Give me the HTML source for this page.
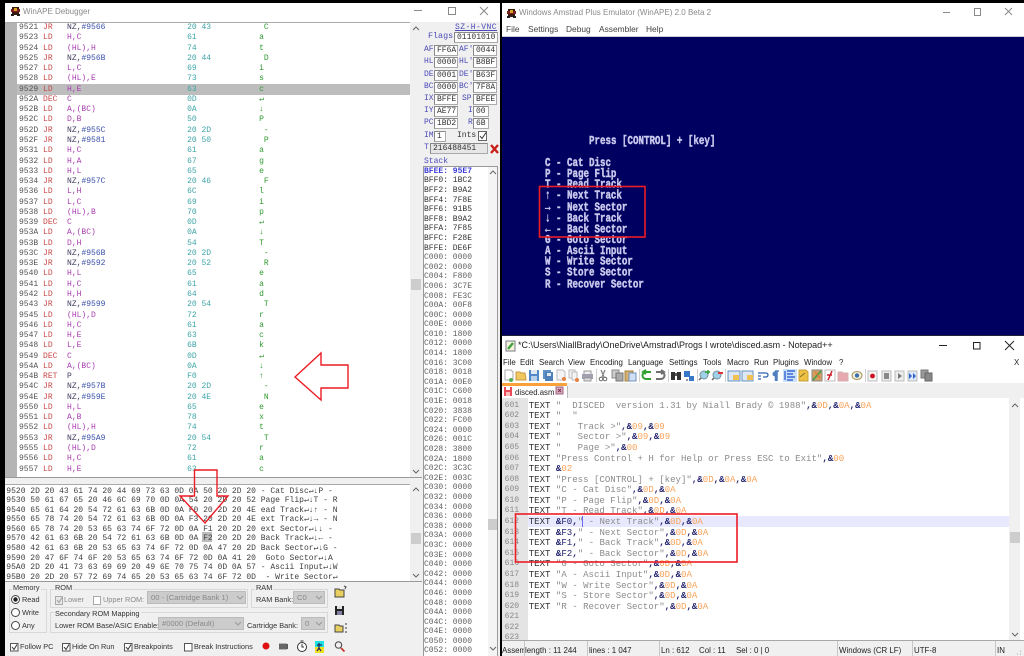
<!DOCTYPE html>
<html><head><meta charset="utf-8"><title>WinAPE</title>
<style>
html,body{margin:0;padding:0;background:#000;width:1024px;height:656px;overflow:hidden}
#r{position:absolute;left:0;top:0;width:1024px;height:656px;overflow:hidden;filter:blur(.38px);background:#000}
.a{position:absolute}
.t{position:absolute;font:7.9px/11px "Liberation Sans",sans-serif;color:#222;white-space:pre}
.c{font-size:7.35px;color:#333}
.g{color:#8a8a8a}
.m,pre{position:absolute;margin:0;font:8px "Liberation Mono",monospace;white-space:pre;color:#555}
pre b{font-weight:normal;color:#c84848}
pre i{font-style:normal;color:#a83cb0}
pre u{text-decoration:none;color:#3a50a8}
pre em{font-style:normal;color:#3fa5a8}
pre tt{font:inherit;color:#2f9a2f}
pre s{text-decoration:none;color:#3f3f5f}
.w{display:inline-block;width:4.8px;text-align:center;overflow:visible}
.lab{position:absolute;font:8px/10px "Liberation Mono",monospace;color:#4a4ab8}
.box{position:absolute;height:9px;background:#fff;border:1px solid #aaa;border-left-color:#888;border-top-color:#888;font:8px/9px "Liberation Mono",monospace;color:#333;padding-left:2px;white-space:pre}
.cmb{position:absolute;background:#ccc;border:1px solid #bbb;font:7.6px/12px "Liberation Sans",sans-serif;color:#888;padding-left:3px;box-sizing:border-box;white-space:pre}
.grp{position:absolute;border:1px solid #d8d8d8;box-sizing:border-box}
#ed{position:absolute;left:528.7px;top:400.700px;margin:0;font:9.07px/10.58px "Liberation Mono",monospace;color:#333;white-space:pre}
#ed q{quotes:none;color:#8c8c8c}
#ed s{text-decoration:none;color:#22226e;font-weight:bold}
#ed u{text-decoration:none;color:#f9a35a}
#nums{position:absolute;left:504.6px;top:400.700px;margin:0;font:8.1px/10.58px "Liberation Mono",monospace;color:#8a8a8a;white-space:pre}
.scr{position:absolute;margin:0;font:bold 9.17px "Liberation Mono",monospace;color:#c9c9ee;white-space:pre;transform-origin:0 0;transform:scaleY(1.35);-webkit-text-stroke:.35px #c9c9ee}
</style></head><body><div id="r">

<!-- DEBUGGER -->
<div class="a" style="left:5px;top:3px;width:495px;height:653px;background:#f0f0f0"></div>
<div class="a" style="left:5px;top:3px;width:495px;height:19px;background:#fff"></div>
<div class="t g" style="left:23px;top:6px;font-size:8px">WinAPE Debugger</div>
<div class="a" style="left:5px;top:22px;width:405px;height:455px;background:#fff;border-top:1px solid #aaa"></div>
<div class="a" style="left:5px;top:23px;width:12px;height:454px;background:#b4b4b4"></div>
<div class="a" style="left:17px;top:84px;width:393px;height:10.5px;background:#bdbdbd"></div>
<div class="a" style="left:410px;top:23px;width:12px;height:454px;background:#f0f0f0"></div>
<div class="a" style="left:411px;top:279px;width:10px;height:11px;background:#cdcdcd"></div>
<div class="a" style="left:5px;top:477px;width:417px;height:1px;background:#999"></div>
<pre style="left:19px;top:23.1px;line-height:10.27px">9521 <b>JR</b>   <s>NZ,</s><u>#9566</u>                 <em>20 43</em>          <tt> C</tt>
9523 <b>LD</b>   <i>H,C</i>                      <em>61</em>             <tt>a</tt>
9524 <b>LD</b>   <i>(HL),H</i>                   <em>74</em>             <tt>t</tt>
9525 <b>JR</b>   <s>NZ,</s><u>#956B</u>                 <em>20 44</em>          <tt> D</tt>
9527 <b>LD</b>   <i>L,C</i>                      <em>69</em>             <tt>i</tt>
9528 <b>LD</b>   <i>(HL),E</i>                   <em>73</em>             <tt>s</tt>
9529 <b>LD</b>   <i>H,E</i>                      <em>63</em>             <tt>c</tt>
952A <b>DEC</b>  <i>C</i>                        <em>0D</em>             <tt>↵</tt>
952B <b>LD</b>   <i>A,(BC)</i>                   <em>0A</em>             <tt>↓</tt>
952C <b>LD</b>   <i>D,B</i>                      <em>50</em>             <tt>P</tt>
952D <b>JR</b>   <s>NZ,</s><u>#955C</u>                 <em>20 2D</em>          <tt> -</tt>
952F <b>JR</b>   <s>NZ,</s><u>#9581</u>                 <em>20 50</em>          <tt> P</tt>
9531 <b>LD</b>   <i>H,C</i>                      <em>61</em>             <tt>a</tt>
9532 <b>LD</b>   <i>H,A</i>                      <em>67</em>             <tt>g</tt>
9533 <b>LD</b>   <i>H,L</i>                      <em>65</em>             <tt>e</tt>
9534 <b>JR</b>   <s>NZ,</s><u>#957C</u>                 <em>20 46</em>          <tt> F</tt>
9536 <b>LD</b>   <i>L,H</i>                      <em>6C</em>             <tt>l</tt>
9537 <b>LD</b>   <i>L,C</i>                      <em>69</em>             <tt>i</tt>
9538 <b>LD</b>   <i>(HL),B</i>                   <em>70</em>             <tt>p</tt>
9539 <b>DEC</b>  <i>C</i>                        <em>0D</em>             <tt>↵</tt>
953A <b>LD</b>   <i>A,(BC)</i>                   <em>0A</em>             <tt>↓</tt>
953B <b>LD</b>   <i>D,H</i>                      <em>54</em>             <tt>T</tt>
953C <b>JR</b>   <s>NZ,</s><u>#956B</u>                 <em>20 2D</em>          <tt> -</tt>
953E <b>JR</b>   <s>NZ,</s><u>#9592</u>                 <em>20 52</em>          <tt> R</tt>
9540 <b>LD</b>   <i>H,L</i>                      <em>65</em>             <tt>e</tt>
9541 <b>LD</b>   <i>H,C</i>                      <em>61</em>             <tt>a</tt>
9542 <b>LD</b>   <i>H,H</i>                      <em>64</em>             <tt>d</tt>
9543 <b>JR</b>   <s>NZ,</s><u>#9599</u>                 <em>20 54</em>          <tt> T</tt>
9545 <b>LD</b>   <i>(HL),D</i>                   <em>72</em>             <tt>r</tt>
9546 <b>LD</b>   <i>H,C</i>                      <em>61</em>             <tt>a</tt>
9547 <b>LD</b>   <i>H,E</i>                      <em>63</em>             <tt>c</tt>
9548 <b>LD</b>   <i>L,E</i>                      <em>6B</em>             <tt>k</tt>
9549 <b>DEC</b>  <i>C</i>                        <em>0D</em>             <tt>↵</tt>
954A <b>LD</b>   <i>A,(BC)</i>                   <em>0A</em>             <tt>↓</tt>
954B <b>RET</b>  <s>P</s>                        <em>F0</em>             <tt>↑</tt>
954C <b>JR</b>   <s>NZ,</s><u>#957B</u>                 <em>20 2D</em>          <tt> -</tt>
954E <b>JR</b>   <s>NZ,</s><u>#959E</u>                 <em>20 4E</em>          <tt> N</tt>
9550 <b>LD</b>   <i>H,L</i>                      <em>65</em>             <tt>e</tt>
9551 <b>LD</b>   <i>A,B</i>                      <em>78</em>             <tt>x</tt>
9552 <b>LD</b>   <i>(HL),H</i>                   <em>74</em>             <tt>t</tt>
9553 <b>JR</b>   <s>NZ,</s><u>#95A9</u>                 <em>20 54</em>          <tt> T</tt>
9555 <b>LD</b>   <i>(HL),D</i>                   <em>72</em>             <tt>r</tt>
9556 <b>LD</b>   <i>H,C</i>                      <em>61</em>             <tt>a</tt>
9557 <b>LD</b>   <i>H,E</i>                      <em>63</em>             <tt>c</tt></pre>

<!-- HEX -->
<div class="a" style="left:5px;top:484px;width:405px;height:97px;background:#fff;border-top:1px solid #aaa;box-sizing:border-box"></div>
<div class="a" style="left:410px;top:484px;width:12px;height:97px;background:#f0f0f0"></div>
<div class="a" style="left:411px;top:533px;width:10px;height:11px;background:#cdcdcd"></div>
<div class="a" style="left:202px;top:532px;width:9.5px;height:10px;background:#bdbdbd"></div>
<div class="a" style="left:5px;top:581px;width:417px;height:1px;background:#999"></div>
<pre style="left:6.3px;top:486.5px;line-height:9.6px;color:#3f3f3f">9520 2D 20 43 61 74 20 44 69 73 63 0D 0A 50 20 2D 20 - Cat Disc<span class="w">↵</span><span class="w">↓</span>P -
9530 50 61 67 65 20 46 6C 69 70 0D 0A 54 20 2D 20 52 Page Flip<span class="w">↵</span><span class="w">↓</span>T - R
9540 65 61 64 20 54 72 61 63 6B 0D 0A F0 20 2D 20 4E ead Track<span class="w">↵</span><span class="w">↓</span><span class="w">↑</span> - N
9550 65 78 74 20 54 72 61 63 6B 0D 0A F3 20 2D 20 4E ext Track<span class="w">↵</span><span class="w">↓</span><span class="w">→</span> - N
9560 65 78 74 20 53 65 63 74 6F 72 0D 0A F1 20 2D 20 ext Sector<span class="w">↵</span><span class="w">↓</span><span class="w">↓</span> -
9570 42 61 63 6B 20 54 72 61 63 6B 0D 0A F2 20 2D 20 Back Track<span class="w">↵</span><span class="w">↓</span><span class="w">←</span> -
9580 42 61 63 6B 20 53 65 63 74 6F 72 0D 0A 47 20 2D Back Sector<span class="w">↵</span><span class="w">↓</span>G -
9590 20 47 6F 74 6F 20 53 65 63 74 6F 72 0D 0A 41 20  Goto Sector<span class="w">↵</span><span class="w">↓</span>A
95A0 2D 20 41 73 63 69 69 20 49 6E 70 75 74 0D 0A 57 - Ascii Input<span class="w">↵</span><span class="w">↓</span>W
95B0 20 2D 20 57 72 69 74 65 20 53 65 63 74 6F 72 0D  - Write Sector<span class="w">↵</span></pre>

<!-- CONTROL PANEL -->
<div class="grp" style="left:9px;top:589px;width:38px;height:44px"></div>
<div class="grp" style="left:50px;top:589px;width:198px;height:19px"></div>
<div class="grp" style="left:251px;top:589px;width:77px;height:19px"></div>
<div class="grp" style="left:50px;top:612px;width:278px;height:21px"></div>
<div class="t c" style="left:12px;top:582px;background:#f0f0f0;padding:0 1px">Memory</div>
<div class="t c" style="left:54px;top:582px;background:#f0f0f0;padding:0 1px">ROM</div>
<div class="t c" style="left:255px;top:582px;background:#f0f0f0;padding:0 1px">RAM</div>
<div class="t c" style="left:54px;top:608px;background:#f0f0f0;padding:0 1px">Secondary ROM Mapping</div>
<div class="t c" style="left:22px;top:594px">Read</div>
<div class="t c" style="left:22px;top:607px">Write</div>
<div class="t c" style="left:22px;top:620px">Any</div>
<div class="t c g" style="left:64px;top:594px;color:#8a8a8a">Lower</div>
<div class="t c g" style="left:103px;top:594px;color:#8a8a8a">Upper ROM:</div>
<div class="cmb" style="left:147px;top:591px;width:99px;height:13px">00 - (Cartridge Bank 1)</div>
<div class="t c" style="left:256px;top:594px">RAM Bank:</div>
<div class="cmb" style="left:293px;top:591px;width:32px;height:13px">C0</div>
<div class="t c" style="left:55px;top:620px">Lower ROM Base/ASIC Enable:</div>
<div class="cmb" style="left:158px;top:617px;width:86px;height:13px">#0000 (Default)</div>
<div class="t c" style="left:247px;top:620px">Cartridge Bank:</div>
<div class="cmb" style="left:301px;top:617px;width:24px;height:13px">0</div>
<div class="t c" style="left:20px;top:641px">Follow PC</div>
<div class="t c" style="left:72px;top:641px">Hide On Run</div>
<div class="t c" style="left:134px;top:641px">Breakpoints</div>
<div class="t c" style="left:194px;top:641px">Break Instructions</div>

<!-- REGISTERS -->
<div class="lab" style="left:455px;top:23px;text-decoration:underline;letter-spacing:.45px">SZ-H-VNC</div>
<div class="lab" style="left:428px;top:31px;font-size:8.4px">Flags</div>
<div class="box" style="left:454px;top:32px;width:40px">01101010</div>
<div class="lab" style="left:424px;top:45px">AF</div><div class="box" style="left:434px;top:45px;width:20px">FF6A</div>
<div class="lab" style="left:459px;top:45px">AF'</div><div class="box" style="left:473px;top:45px;width:20px">0044</div>
<div class="lab" style="left:424px;top:57px">HL</div><div class="box" style="left:434px;top:57px;width:20px">0000</div>
<div class="lab" style="left:459px;top:57px">HL'</div><div class="box" style="left:473px;top:57px;width:20px">B8BF</div>
<div class="lab" style="left:424px;top:70px">DE</div><div class="box" style="left:434px;top:70px;width:20px">0001</div>
<div class="lab" style="left:459px;top:70px">DE'</div><div class="box" style="left:473px;top:70px;width:20px">B63F</div>
<div class="lab" style="left:424px;top:82px">BC</div><div class="box" style="left:434px;top:82px;width:20px">0000</div>
<div class="lab" style="left:459px;top:82px">BC'</div><div class="box" style="left:473px;top:82px;width:20px">7F8A</div>
<div class="lab" style="left:424px;top:94px">IX</div><div class="box" style="left:434px;top:94px;width:20px">BFFE</div>
<div class="lab" style="left:462px;top:94px">SP</div><div class="box" style="left:473px;top:94px;width:20px">BFEE</div>
<div class="lab" style="left:424px;top:106px">IY</div><div class="box" style="left:434px;top:106px;width:20px">AE77</div>
<div class="lab" style="left:468px;top:106px">I</div><div class="box" style="left:473px;top:106px;width:12px">00</div>
<div class="lab" style="left:424px;top:118px">PC</div><div class="box" style="left:434px;top:118px;width:20px">1BD2</div>
<div class="lab" style="left:468px;top:118px">R</div><div class="box" style="left:473px;top:118px;width:12px">6B</div>
<div class="lab" style="left:424px;top:131px">IM</div><div class="box" style="left:434px;top:131px;width:8px">1</div>
<div class="lab" style="left:457px;top:131px;color:#333">Ints</div>
<div class="lab" style="left:424px;top:143px">T</div><div class="box" style="left:430px;top:143px;width:54px;background:#e6e6e6">216488451</div>
<div class="lab" style="left:424px;top:156.500px">Stack</div>
<div class="a" style="left:423px;top:166px;width:75px;height:490px;background:#fff;border:1px solid #999;border-bottom:0;box-sizing:border-box"></div>
<div class="a" style="left:488px;top:167px;width:9px;height:489px;background:#f4f4f4"></div>
<div class="a" style="left:488px;top:519px;width:9px;height:11px;background:#cdcdcd"></div>
<pre style="left:424px;top:166.8px;line-height:9.59px;color:#5f5f5f"><span style="color:#3a3ad8;font-weight:bold">BFEE: 95E7</span>
<span style="color:#333">BFF0: 1BC2
BFF2: B9A2
BFF4: 7F8E
BFF6: 91B5
BFF8: B9A2
BFFA: 7F85
BFFC: F28E
BFFE: DE6F</span>
C000: 0000
C002: 0000
C004: F800
C006: 3C7E
C008: FE3C
C00A: 00F8
C00C: 0000
C00E: 0000
C010: 1800
C012: 0000
C014: 1800
C016: 3C00
C018: 0018
C01A: 00E0
C01C: C600
C01E: 0018
C020: 3838
C022: FC00
C024: 0000
C026: 001C
C028: 3800
C02A: 1800
C02C: 3C3C
C02E: 003C
C030: 0000
C032: 0000
C034: 0000
C036: 0000
C038: 0000
C03A: 0000
C03C: 0000
C03E: 0000
C040: 0000
C042: 0000
C044: 0000
C046: 0000
C048: 0000
C04A: 0000
C04C: 0000
C04E: 0000
C050: 0000
C052: 0000</pre>

<!-- EMULATOR -->
<div class="a" style="left:502px;top:3px;width:522px;height:34px;background:#fff"></div>
<div class="a" style="left:502px;top:36px;width:522px;height:1px;background:#c8ccd8"></div>
<div class="a" style="left:502px;top:37px;width:522px;height:298px;background:#000060"></div>
<div class="t g" style="left:519px;top:7px;font-size:8px">Windows Amstrad Plus Emulator (WinAPE) 2.0 Beta 2</div>
<div class="t" style="left:506px;top:24px;color:#444;font-size:8.4px">File</div>
<div class="t" style="left:528px;top:24px;color:#444;font-size:8.4px">Settings</div>
<div class="t" style="left:566px;top:24px;color:#444;font-size:8.4px">Debug</div>
<div class="t" style="left:599px;top:24px;color:#444;font-size:8.4px">Assembler</div>
<div class="t" style="left:646px;top:24px;color:#444;font-size:8.4px">Help</div>
<pre class="scr" style="left:589px;top:136px;line-height:8.15px">Press [CONTROL] + [key]</pre>
<pre class="scr" style="left:545px;top:158px;line-height:8.148px">C - Cat Disc
P - Page Flip
T - Read Track
↑ - Next Track
→ - Next Sector
↓ - Back Track
← - Back Sector
G - Goto Sector
A - Ascii Input
W - Write Sector
S - Store Sector
R - Recover Sector</pre>

<!-- NOTEPAD++ -->
<div class="a" style="left:502px;top:335px;width:522px;height:321px;background:#fff"></div>
<div class="a" style="left:502px;top:335px;width:522px;height:1px;background:#20203a"></div>
<div class="t" style="left:518px;top:340px;font-size:9px">*C:\Users\NiallBrady\OneDrive\Amstrad\Progs I wrote\disced.asm - Notepad++</div>
<div class="t" style="left:503px;top:357px">File</div>
<div class="t" style="left:520px;top:357px">Edit</div>
<div class="t" style="left:539px;top:357px">Search</div>
<div class="t" style="left:568px;top:357px">View</div>
<div class="t" style="left:590px;top:357px">Encoding</div>
<div class="t" style="left:628px;top:357px">Language</div>
<div class="t" style="left:669px;top:357px">Settings</div>
<div class="t" style="left:703px;top:357px">Tools</div>
<div class="t" style="left:727px;top:357px">Macro</div>
<div class="t" style="left:754px;top:357px">Run</div>
<div class="t" style="left:773px;top:357px">Plugins</div>
<div class="t" style="left:804px;top:357px">Window</div>
<div class="t" style="left:839px;top:357px">?</div>
<div class="t" style="left:1014px;top:357px">X</div>
<div class="a" style="left:502px;top:383px;width:522px;height:15px;background:#f0f0f0"></div>
<div class="a" style="left:502px;top:383px;width:65px;height:15px;background:#fff;border-top:3px solid #f9a23a;box-sizing:border-box"></div>
<div class="t" style="left:515px;top:387px;font-size:7.8px">disced.asm</div>
<div class="a" style="left:502px;top:398px;width:26px;height:243px;background:#e4e4e4"></div>
<div class="a" style="left:528px;top:516px;width:481px;height:11px;background:#e8e8ff"></div>
<div class="a" style="left:1009px;top:398px;width:11px;height:243px;background:#f0f0f0"></div>
<div class="a" style="left:1010px;top:532px;width:10px;height:11px;background:#cdcdcd"></div>
<div class="a" style="left:582px;top:516px;width:1px;height:11px;background:#6a6af0"></div>
<pre id="nums">601
602
603
604
605
606
607
608
609
610
611
612
613
614
615
616
617
618
619
620
621
622
623</pre>
<pre id="ed">TEXT <q>"  DISCED  version 1.31 by Niall Brady © 1988"</q><s>,&amp;</s><u>0D</u><s>,&amp;</s><u>0A</u><s>,&amp;</s><u>0A</u>
TEXT <q>"  "</q>
TEXT <q>"   Track &gt;"</q><s>,&amp;</s><u>09</u><s>,&amp;</s><u>09</u>
TEXT <q>"   Sector &gt;"</q><s>,&amp;</s><u>09</u><s>,&amp;</s><u>09</u>
TEXT <q>"   Page &gt;"</q><s>,&amp;</s><u>00</u>
TEXT <q>"Press Control + H for Help or Press ESC to Exit"</q><s>,&amp;</s><u>00</u>
TEXT <s>&amp;</s><u>02</u>
TEXT <q>"Press [CONTROL] + [key]"</q><s>,&amp;</s><u>0D</u><s>,&amp;</s><u>0A</u><s>,&amp;</s><u>0A</u>
TEXT <q>"C - Cat Disc"</q><s>,&amp;</s><u>0D</u><s>,&amp;</s><u>0A</u>
TEXT <q>"P - Page Flip"</q><s>,&amp;</s><u>0D</u><s>,&amp;</s><u>0A</u>
TEXT <q>"T - Read Track"</q><s>,&amp;</s><u>0D</u><s>,&amp;</s><u>0A</u>
TEXT <s>&amp;</s><span style="color:#22226e">F0</span><s>,</s><q>" - Next Track"</q><s>,&amp;</s><u>0D</u><s>,&amp;</s><u>0A</u>
TEXT <s>&amp;</s><span style="color:#22226e">F3</span><s>,</s><q>" - Next Sector"</q><s>,&amp;</s><u>0D</u><s>,&amp;</s><u>0A</u>
TEXT <s>&amp;</s><span style="color:#22226e">F1</span><s>,</s><q>" - Back Track"</q><s>,&amp;</s><u>0D</u><s>,&amp;</s><u>0A</u>
TEXT <s>&amp;</s><span style="color:#22226e">F2</span><s>,</s><q>" - Back Sector"</q><s>,&amp;</s><u>0D</u><s>,&amp;</s><u>0A</u>
TEXT <q>"G - Goto Sector"</q><s>,&amp;</s><u>0D</u><s>,&amp;</s><u>0A</u>
TEXT <q>"A - Ascii Input"</q><s>,&amp;</s><u>0D</u><s>,&amp;</s><u>0A</u>
TEXT <q>"W - Write Sector"</q><s>,&amp;</s><u>0D</u><s>,&amp;</s><u>0A</u>
TEXT <q>"S - Store Sector"</q><s>,&amp;</s><u>0D</u><s>,&amp;</s><u>0A</u>
TEXT <q>"R - Recover Sector"</q><s>,&amp;</s><u>0D</u><s>,&amp;</s><u>0A</u></pre>
<div class="a" style="left:502px;top:640px;width:522px;height:16px;background:#f0f0f0;border-top:1px solid #a8a8a8;box-sizing:border-box"></div>
<div class="t" style="left:502px;top:645px;width:22px;overflow:hidden">Assembly</div>
<div class="t" style="left:525px;top:645px">length : 11 244</div>
<div class="t" style="left:589px;top:645px">lines : 1 047</div>
<div class="t" style="left:661px;top:645px">Ln : 612</div>
<div class="t" style="left:699px;top:645px">Col : 11</div>
<div class="t" style="left:736px;top:645px">Sel : 0 | 0</div>
<div class="t" style="left:839px;top:645px">Windows (CR LF)</div>
<div class="t" style="left:914px;top:645px">UTF-8</div>
<div class="t" style="left:997px;top:645px">IN</div>

<!-- GRAPHICS OVERLAY -->
<svg class="a" style="left:0;top:0" width="1024" height="656" viewBox="0 0 1024 656" fill="none">
<!-- debugger icon -->
<g id="ape"><rect x="12" y="7" width="7" height="8" fill="#3a1a10"/><rect x="11" y="9" width="9" height="3" fill="#7a2020"/><rect x="14" y="8" width="3" height="3" fill="#d8a020"/><rect x="11" y="14" width="3" height="2" fill="#202020"/><rect x="17" y="14" width="3" height="2" fill="#202020"/></g>
<use href="#ape" x="496" y="2"/>
<!-- title buttons -->
<g stroke="#8a8a8a"><path d="M414 10.5h8"/><rect x="448.5" y="7.5" width="7" height="7"/><path d="M480 7l8 8M488 7l-8 8"/>
<path d="M943 12.5h7"/><rect x="974.5" y="8.5" width="6" height="7"/><path d="M1005 8l7 7M1012 8l-7 7"/></g>
<g stroke="#222"><path d="M939 345.5h8"/><rect x="973.5" y="342.5" width="6.5" height="6.5"/><path d="M1005 341l9 9M1014 341l-9 9"/></g>
<!-- scroll chevrons -->
<g stroke="#666"><path d="M413 30l3-3 3 3M413 470l3 3 3-3M413 491l3-3 3 3M413 574l3 3 3-3M490 174l3-3 3 3M490 647l3 3 3-3M1012 407l3-3 3 3M1012 633l3 3 3-3"/></g>
<!-- combos chevrons -->
<g stroke="#999"><path d="M237 596l3 3 3-3M316 596l3 3 3-3M235 622l3 3 3-3M316 622l3 3 3-3"/></g>
<!-- ints check -->
<rect x="478.5" y="131.5" width="8" height="9" fill="#fff" stroke="#666"/><path d="M480 136l2 2.5 4-6" stroke="#333"/>
<!-- red X -->
<path d="M491 145l7 8M498 145l-7 8" stroke="#c8201a" stroke-width="2.4"/>
<!-- radios -->
<circle cx="15.5" cy="599.5" r="4" fill="#fff" stroke="#444"/><circle cx="15.5" cy="599.5" r="2.2" fill="#222"/>
<circle cx="15.5" cy="612.5" r="4" fill="#fff" stroke="#444"/>
<circle cx="15.5" cy="625.5" r="4" fill="#fff" stroke="#444"/>
<!-- checkboxes -->
<rect x="55.5" y="596.5" width="7" height="8" fill="#e8e8e8" stroke="#aaa"/><path d="M57 600l2 2.5 3-5" stroke="#999"/>
<rect x="93.5" y="596.5" width="7" height="8" fill="#fff" stroke="#aaa"/>
<g fill="#fff" stroke="#555"><rect x="10.5" y="643.5" width="7.5" height="7.5"/><rect x="62.5" y="643.5" width="7.5" height="7.5"/><rect x="124.5" y="643.5" width="7.5" height="7.5"/><rect x="184.5" y="643.5" width="7.5" height="7.5"/></g>
<path d="M12 647l2 2.5 3-5M64 647l2 2.5 3-5M126 647l2 2.5 3-5" stroke="#333"/>
<!-- folder/save icons -->
<path d="M335 589h4l1 1h4v7h-9z" fill="#e8d060" stroke="#444"/><path d="M344 586l2 1-1 2" stroke="#444"/>
<rect x="335" y="606" width="9" height="9" fill="#222"/><rect x="337" y="606" width="5" height="3" fill="#e0e0e0"/><rect x="337" y="611" width="5" height="4" fill="#8080a0"/>
<path d="M335 625h4l1 1h3v6h-8z" fill="#e8d060" stroke="#444"/><path d="M346 623v2M346 627v2M346 631v2" stroke="#333"/>
<!-- bottom icons -->
<circle cx="266" cy="646" r="3.5" fill="#e01010"/>
<rect x="279" y="644" width="9" height="5" fill="#555"/><path d="M280 643v7M282 643v7M284 643v7M286 643v7" stroke="#777"/>
<circle cx="302" cy="647" r="4.5" fill="#fff" stroke="#333"/><path d="M302 644v3h2M300.500 641h3" stroke="#333"/>
<rect x="315" y="641" width="9" height="6" fill="#20e0e0"/><rect x="315" y="647" width="9" height="6" fill="#f0e020"/><path d="M319 643v5l-2 3M319 648l2 3M317 645h5" stroke="#202060" stroke-width="1.2"/>
<circle cx="338.500" cy="645" r="3.2" stroke="#555" stroke-width="1.2"/><path d="M341 648l3.500 3.500" stroke="#c03020" stroke-width="1.6"/>
<!-- n++ icon -->
<rect x="506" y="341" width="9" height="10" fill="#f4f4d8" stroke="#778"/><path d="M508 349l5-6" stroke="#40a040" stroke-width="2.4"/>
<!-- tab icon -->
<rect x="504" y="387" width="8" height="9" fill="#e84a5a"/><rect x="506" y="387" width="4" height="3" fill="#fff"/><rect x="506" y="392" width="4" height="4" fill="#fbb"/>
<rect x="556" y="387" width="7" height="7" fill="#d8b0c0" stroke="#a06080"/><path d="M558 389l3 3M561 389l-3 3" stroke="#803050"/>
<path d="M567.500 386v12" stroke="#b8b8b8"/>
<!-- toolbar -->
<g>
<path d="M505 370h6l2 2v8h-8z" fill="#fff" stroke="#aaa"/><circle cx="511" cy="380" r="2" fill="#50b050"/>
<path d="M516 372h4l1 1h4l1 7h-10z" fill="#f0c860" stroke="#c89840"/>
<rect x="529" y="370" width="10" height="11" fill="#5088c8"/><rect x="531" y="370" width="6" height="4" fill="#e0e8f0"/><rect x="531" y="376" width="6" height="5" fill="#b8d0e8"/>
<rect x="543" y="370" width="8" height="9" fill="#6090c8"/><rect x="545" y="372" width="8" height="9" fill="#5080b8"/><rect x="547" y="373" width="4" height="3" fill="#e0e8f0"/>
<path d="M557 370h6l2 2v8h-8z" fill="#f4f4f4" stroke="#bbb"/><circle cx="564" cy="379" r="2" fill="#e88040"/>
<path d="M569 370h6v8h-6z" fill="#f4f4f4" stroke="#bbb"/><path d="M572 372h5v8h-5z" fill="#f4f4f4" stroke="#bbb"/><circle cx="577" cy="380" r="2" fill="#e88040"/>
<rect x="584" y="371" width="7" height="4" fill="#eee" stroke="#999"/><rect x="582" y="374" width="11" height="5" fill="#a0a0b0"/><rect x="584" y="378" width="7" height="3" fill="#ddd" stroke="#999"/>
<path d="M596.500 369v13" stroke="#d0d0d0"/>
<path d="M605 370l-3 7M601 370l3 7" stroke="#888" stroke-width="1.300"/><circle cx="601" cy="379" r="1.800" stroke="#666"/><circle cx="605" cy="379" r="1.800" stroke="#666"/>
<rect x="612" y="370" width="7" height="8" fill="#ccc" stroke="#888"/><rect x="616" y="373" width="7" height="8" fill="#aaa" stroke="#777"/>
<rect x="625" y="371" width="8" height="10" fill="#d8b070" stroke="#a08040"/><rect x="629" y="373" width="7" height="8" fill="#cfe0f4" stroke="#7090c0"/>
<path d="M639.500 369v13" stroke="#d0d0d0"/>
<path d="M651 372h-5a3 3 0 0 0 0 7h5M646 370l-3 2 3 2" stroke="#30a030" stroke-width="2"/>
<path d="M656 372h5a3 3 0 0 1 0 7h-5M661 370l3 2-3 2" stroke="#707070" stroke-width="2"/>
<path d="M668.500 369v13" stroke="#d0d0d0"/>
<rect x="671" y="372" width="4" height="8" fill="#333"/><rect x="677" y="372" width="4" height="8" fill="#333"/><rect x="675" y="373" width="2" height="3" fill="#555"/>
<rect x="684" y="371" width="6" height="6" fill="#3878c8"/><rect x="689" y="376" width="5" height="5" fill="#3878c8"/><path d="M686 380h2" stroke="#333"/>
<path d="M697.500 369v13" stroke="#d0d0d0"/>
<circle cx="704" cy="375" r="4" fill="#a0d0e8" stroke="#7090a0"/><path d="M705 372h5M708 370v4" stroke="#30a030" stroke-width="1.500"/><path d="M701 378l-2 2" stroke="#666" stroke-width="1.500"/>
<circle cx="717" cy="375" r="4" fill="#a0d0e8" stroke="#7090a0"/><path d="M718 373h5" stroke="#e03030" stroke-width="2"/><path d="M714 378l-2 2" stroke="#666" stroke-width="1.500"/>
<path d="M725.500 369v13" stroke="#d0d0d0"/>
<rect x="728" y="371" width="12" height="10" fill="#dbe8f4" stroke="#6a8fc0"/><rect x="733" y="375" width="6" height="5" fill="#f0c050"/>
<rect x="742" y="371" width="11" height="10" fill="#dbe8f4" stroke="#6a8fc0"/><rect x="747" y="375" width="6" height="5" fill="#f0c050"/>
<path d="M758 373h8a2 2 0 0 1 0 4h-3M758 376h3M758 379h3" stroke="#3060b0" stroke-width="1.300"/>
<path d="M775 371h4M777 371v10M775.500 371v10" stroke="#5080c0" stroke-width="1.500"/><circle cx="775" cy="374" r="2.500" fill="#5080c0"/>
<rect x="783" y="369" width="14" height="13" fill="#c8e0f8"/><path d="M787 371h8M787 374h6M787 377h8M787 380h6M785 371v9" stroke="#2050d0" stroke-width="1.200"/>
<path d="M799 370h7l2 2v9h-9z" fill="#f0c040" stroke="#c0a040"/><path d="M800 377l5-4" stroke="#807030"/>
<rect x="812" y="370" width="10" height="11" fill="#d8a060" stroke="#888"/><path d="M813 380l8-9" stroke="#50a050" stroke-width="2"/><path d="M815 372l5 6" stroke="#e07030"/>
<rect x="825" y="370" width="10" height="11" fill="#fff" stroke="#bbb"/><path d="M828 380l4-9M827 375h5" stroke="#d02030" stroke-width="1.500"/>
<path d="M838 372h4l1 1h5v8h-10z" fill="#e8a8b0" stroke="#d0b0b0"/>
<ellipse cx="857" cy="375.500" rx="5" ry="4" fill="#f4f0d8" stroke="#a09060"/><circle cx="857" cy="375.500" r="2.200" fill="#4070b0"/>
<path d="M865.500 369v13" stroke="#d0d0d0"/>
<rect x="868" y="371" width="9" height="10" fill="#f4f4f4" stroke="#bbb"/><circle cx="872.500" cy="376" r="2.400" fill="#d01020"/>
<rect x="882" y="371" width="9" height="10" fill="#eee" stroke="#bbb"/><rect x="884" y="373" width="5" height="6" fill="#888"/>
<rect x="895" y="371" width="9" height="10" fill="#eee" stroke="#bbb"/><path d="M898 373l4 3-4 3z" fill="#777"/>
<rect x="908" y="371" width="9" height="10" fill="#dde8f8" stroke="#bbb"/><path d="M909 373l3 3-3 3zM913 373l3 3-3 3z" fill="#3060d0"/>
<rect x="921" y="370" width="7" height="8" fill="#999" stroke="#777"/><rect x="925" y="373" width="7" height="8" fill="#888" stroke="#666"/>
</g>
<!-- status separators -->
<path d="M524.500 641v15M587.500 641v15M659.500 641v15M837.500 641v15M912.500 641v15M995.500 641v15" stroke="#c8c8c8"/>
<path d="M1017 654h1M1020 654h1M1020 651h1" stroke="#aaa"/>
<!-- red annotations -->
<g stroke="#ec1c24" stroke-width="1.400">
<path d="M295 377L321 353V365H348V388H321V400Z" fill="#fff"/>
<path d="M194.500 470V496H180L205 523L228 496H217V470Z"/>
<rect x="539.500" y="186.500" width="105.500" height="50.500" stroke-width="1.600"/>
<rect x="515.500" y="514" width="221.500" height="48" stroke-width="1.600"/>
</g>
</svg>
</div></body></html>
